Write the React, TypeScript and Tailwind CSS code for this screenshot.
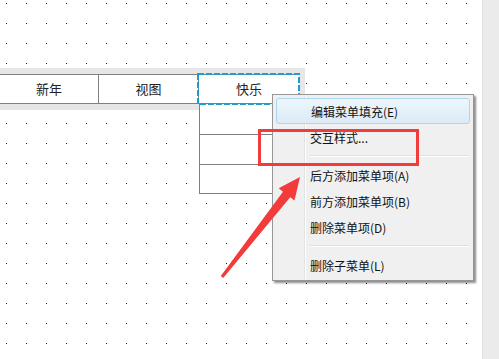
import React from "react";

const font = { fontFamily: '"Noto Sans CJK SC", "Noto Sans", sans-serif' };

function Item({ label, active }: { label: string; active?: boolean }) {
  return (
    <div
      className={
        "h-[26px] flex items-center pl-[34px] pt-[2px] text-[12px] text-[#111] " +
        (active
          ? "rounded-[3px] border border-[#a9d7ee] bg-[linear-gradient(#eef6fc,#dbeaf6)] pl-[33px]"
          : "")
      }
    >
      {label}
    </div>
  );
}

function Sep() {
  return (
    <div className="h-[12px] flex items-center pl-[34px] pr-[1px]">
      <div className="w-full h-[2px] border-t border-[#e0e0e0] border-b border-b-white" />
    </div>
  );
}

export default function App() {
  return (
    <div className="w-[499px] h-[359px] overflow-hidden flex bg-white" style={font}>
      <div className="relative w-[482px] h-full pt-[68px] bg-white bg-[image:conic-gradient(at_1px_1px,transparent_75%,#0000ff_0)] bg-[size:20px_20px] bg-[position:6px_3px]">
        {/* menu bar widget */}
        <div className="w-[305px] bg-[#e6e6e6] pt-[6px] pr-[6px]">
          <div className="flex h-[30px] border-y border-[#808080] bg-white text-[13px] text-[#222]">
            <div className="w-[99px] border-r border-[#808080] flex items-center justify-center">新年</div>
            <div className="w-[100px] border-r border-[#808080] flex items-center justify-center">视图</div>
            <div className="relative w-[100px] flex items-center justify-center">
              快乐
              <svg className="absolute left-[-2px] top-[-2px]" width="103" height="32" viewBox="0 0 103 32">
                <rect x="1" y="1" width="101" height="30" fill="none" stroke="#1a9cd8" strokeWidth="2" strokeDasharray="6 2" />
              </svg>
            </div>
          </div>
        </div>
        <div className="flex">
          <div className="w-[199px] h-[6px] bg-[#e6e6e6]" />
          <div className="w-[100px] bg-white border-l border-r border-[#808080]">
            <div className="h-[31px] border-b border-[#808080]" />
            <div className="h-[30px] border-b border-[#808080]" />
            <div className="h-[29px] border-b border-[#808080]" />
          </div>
        </div>

        {/* context menu */}
        <div className="absolute left-[272px] top-[94px] w-[202px] h-[187px] border border-[#979797] bg-[#f0f0f0] shadow-[2px_2px_2px_rgba(0,0,0,0.45)] px-[3px] pt-[3px]">
          <div className="absolute left-[31px] top-[1px] bottom-[1px] w-[2px] border-l border-[#e2e3e3] border-r border-r-white" />
          <div className="relative">
            <Item label="编辑菜单填充(E)" active />
            <Item label="交互样式..." />
            <Sep />
            <Item label="后方添加菜单项(A)" />
            <Item label="前方添加菜单项(B)" />
            <Item label="删除菜单项(D)" />
            <Sep />
            <Item label="删除子菜单(L)" />
          </div>
        </div>

        {/* annotation rectangle */}
        <div className="absolute left-[258px] top-[129px] w-[161px] h-[37px] border-[3px] border-[#f23b3b]" />

        {/* annotation arrow */}
        <svg className="absolute left-0 top-0" width="482" height="359" viewBox="0 0 482 359">
          <polygon
            points="220.8,276.1 283.0,191.7 278.7,188.3 300,177 294.5,200.5 290.2,197.2 223.2,277.9"
            fill="#f23b3b"
          />
        </svg>
      </div>
      <div className="w-[17px] h-full bg-[#ebebeb] border-l border-[#e0e0e0]" />
    </div>
  );
}
